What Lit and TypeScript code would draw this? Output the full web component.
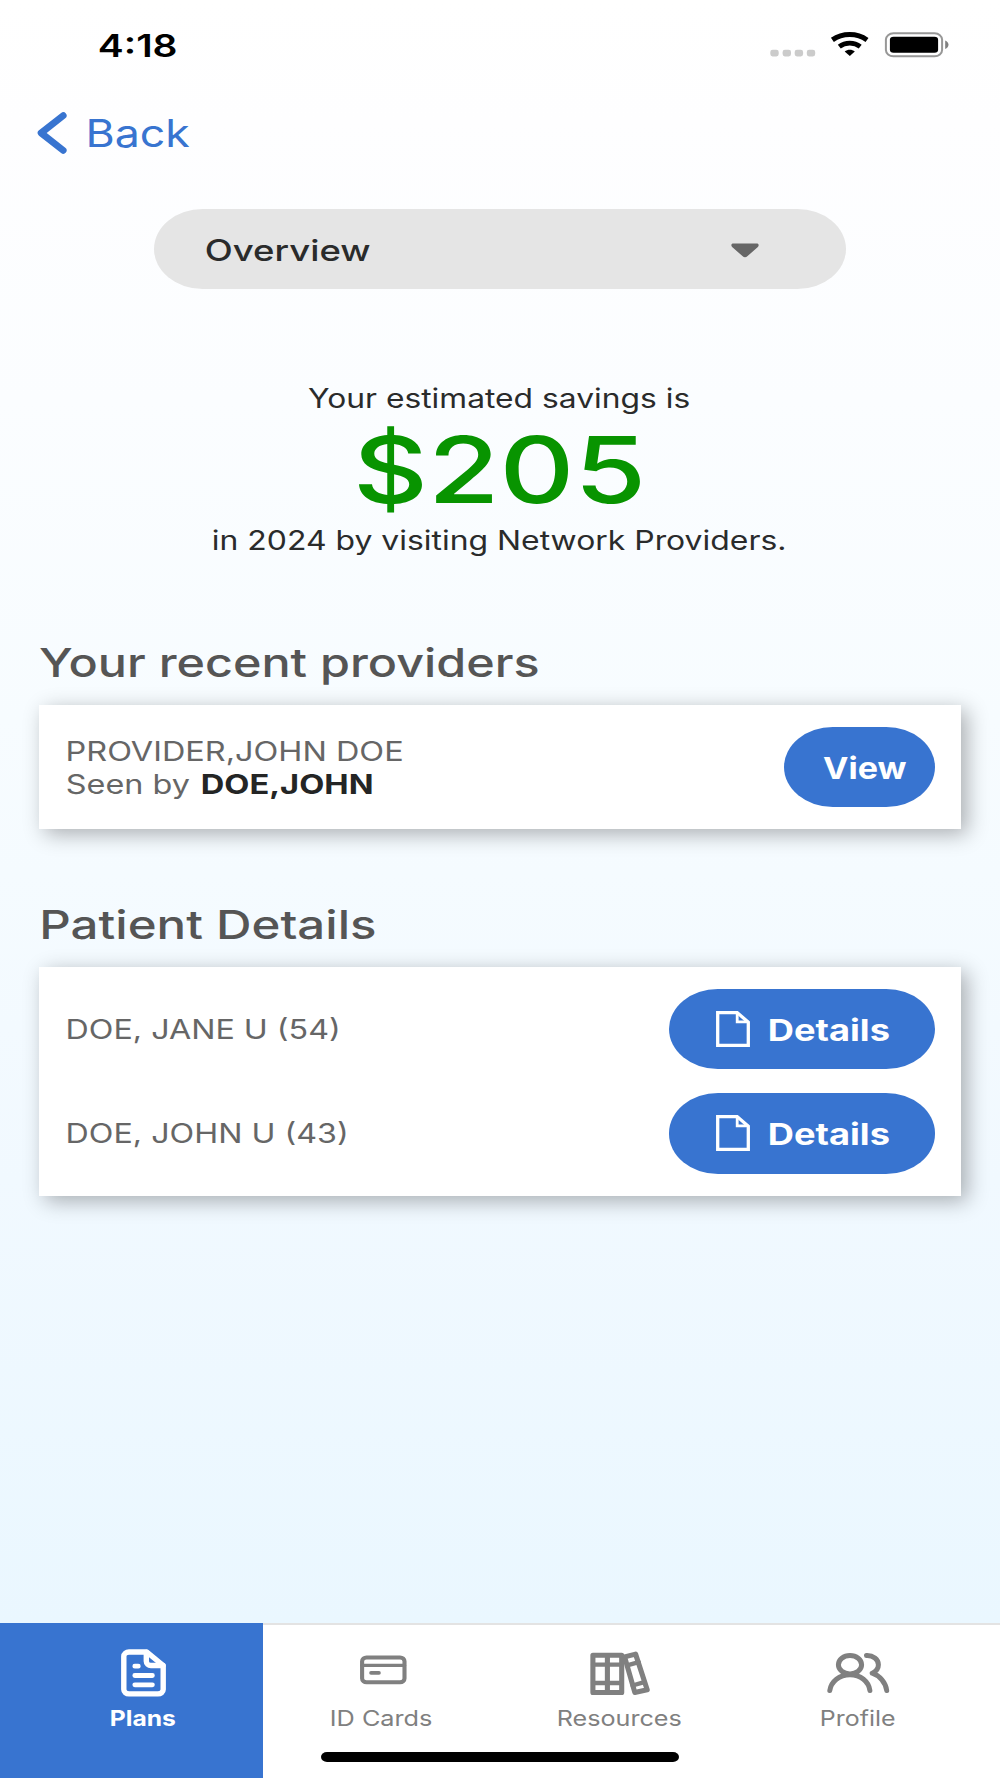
import { LitElement, html, css, svg } from "lit";
import { customElement, property, state } from "lit/decorators.js";
import { styleMap } from "lit/directives/style-map.js";

/** A single line of wide-set text, stretched so its ink spans exactly `span` pixels. */
@customElement("wide-text")
class WideText extends LitElement {
  @property({ type: Number }) span = 100;
  @property() text = "";
  @state() private matrix = "none";

  static styles = css`
    :host { display: block; flex: none; white-space: pre; }
    .line { display: block; }
    .ink { display: inline-block; transform-origin: 0 50%; white-space: pre; }
  `;

  firstUpdated() {
    const cs = getComputedStyle(this);
    const ctx = document.createElement("canvas").getContext("2d")!;
    ctx.font = `${cs.fontWeight} ${cs.fontSize} ${cs.fontFamily}`;
    const m = ctx.measureText(this.text);
    const left = -m.actualBoundingBoxLeft;
    const ink = m.actualBoundingBoxRight - left;
    const k = this.span / ink;
    this.matrix = `translateX(${(-left * k).toFixed(2)}px) scaleX(${k.toFixed(4)})`;
  }

  render() {
    return html`<span class="line" style=${styleMap({ width: `${this.span}px` })}
      ><span class="ink" style=${styleMap({ transform: this.matrix })}>${this.text}</span></span>`;
  }
}

const pageIcon = html`<svg class="page" width="34" height="36" viewBox="0 0 34 36" fill="none" stroke="#fff" stroke-width="3.3">
  <path d="M1.7 1.6H21.2L32.3 11.2V34.4H1.7Z" /><path d="M21.2 1.6V10.8H32.3" stroke-width="2.8" />
</svg>`;

const plansIcon = svg`<g stroke-width="5.4">
  <path d="M146.8 1651.5H129a5.2 4.4 0 0 0-5.2 4.4V1689a5.2 4.4 0 0 0 5.2 4.4H158a5.2 4.4 0 0 0 5.2-4.4V1665Z" />
  <path d="M146.3 1652V1660.8a4.6 4.2 0 0 0 4.6 4.2H163" />
  <path d="M134.8 1665.7H138.3M134.8 1675H152.4M134.8 1684.3H152.4" stroke-width="4.8" /></g>`;

const cardsIcon = svg`<rect x="361.1" y="1657" width="42.4" height="24.8" rx="4.4" ry="3.8" stroke-width="4.1" />
  <path d="M361 1664.8H403.5" stroke-width="3.2" /><path d="M370 1672.4H378" stroke-width="3.6" />`;

const resourcesIcon = svg`<g stroke-width="5.1">
  <path d="M591.9 1654.7H620.7V1692H591.9ZM606.4 1654.7V1692" />
  <path d="M592 1664.2H620.7M592 1682.5H620.7" stroke-width="4.3" />
  <path d="M623.6 1656.4L634.6 1653.6L646.2 1689.3L633.8 1691.9Z" />
  <path d="M627 1664.6L637.8 1661.6M631.5 1685L643.2 1681.6" stroke-width="4.3" /></g>`;

const profileIcon = svg`<g stroke-width="5">
  <ellipse cx="849" cy="1664.3" rx="11.6" ry="9.2" />
  <path d="M828.8 1690C830 1681 838.5 1674.2 849 1674.2S867.8 1681 868.9 1690" />
  <path d="M865.5 1655.1C872 1654.8 877.4 1659 877.4 1664.3C877.4 1668 875.2 1671 871.2 1672.7C878.5 1675 884.6 1682 885.7 1690" /></g>`;

const tabs = [
  { label: "Plans", span: 65, origin: 108, icon: plansIcon, active: true },
  { label: "ID Cards", span: 101, origin: 346, icon: cardsIcon, active: false },
  { label: "Resources", span: 123.5, origin: 584, icon: resourcesIcon, active: false },
  { label: "Profile", span: 74, origin: 822, icon: profileIcon, active: false },
];

const patients = [
  { name: "DOE, JANE U (54)", span: 269.5 },
  { name: "DOE, JOHN U (43)", span: 277.5 },
];

@customElement("app-root")
class AppRoot extends LitElement {
  static styles = css`
    :host {
      display: flex; flex-direction: column; box-sizing: border-box;
      width: 1000px; height: 1778px; overflow: hidden; position: relative;
      font-family: Inter, "Liberation Sans", sans-serif; color: #2a2b2b;
      background: linear-gradient(#fff 0, #fefeff 120px, #fbfdff 400px, #f7fcff 720px, #f1f9ff 1180px, #eaf7ff 1623px);
    }
    svg { display: block; flex: none; overflow: visible; }
    .status { display: flex; align-items: center; height: 90px; padding: 0 52px 0 99px; }
    .time { font-size: 31px; line-height: 90px; padding-top: 1px; font-weight: 600; color: #000; margin-right: auto; }
    .back { display: flex; align-items: center; height: 86px; padding-left: 37px; gap: 22px; color: #3874d0; }
    .back wide-text { font-size: 38px; line-height: 86px; }
    .select {
      display: flex; align-items: center; align-self: center; box-sizing: border-box;
      width: 692px; height: 80.5px; margin-top: 32.5px; padding: 2px 87px 0 52px;
      background: #e5e5e5; border-radius: 49px / 40.25px;
    }
    .select wide-text { font-size: 29.5px; font-weight: 500; line-height: 80px; margin-right: auto; }
    .select svg { margin-top: 1px; }
    .savings { display: flex; flex-direction: column; align-items: center; margin-top: 91px; }
    .note { font-size: 26.5px; line-height: 36px; margin-right: 4px; }
    .amount { font-size: 92px; line-height: 108px; font-weight: 500; color: #089400; margin-right: 3px; }
    .note.last { line-height: 33px; margin-right: 2px; }
    .heading { margin: 81px 0 17px 38.5px; font-size: 39.5px; line-height: 50px; font-weight: 500; color: #555; }
    .heading.second { margin: 70.5px 0 17px 43px; }
    .card {
      display: flex; flex-direction: column; gap: 24px; box-sizing: border-box; margin: 0 39px;
      padding: 22px 26px 22px 29px; background: #fff;
      box-shadow: 6px 5px 20px rgba(0, 0, 0, 0.31);
    }
    .row { display: flex; align-items: center; justify-content: space-between; height: 80.4px;
      font-size: 26.5px; color: #666; line-height: 32.6px; }
    .lines { padding-top: 1px; }
    .seen { display: flex; gap: 12px; margin-left: -1px; }
    .strong { font-weight: 700; color: #242525; }
    .button {
      display: flex; align-items: center; box-sizing: border-box; width: 266px; height: 80.4px; gap: 18.5px;
      margin: 0; padding: 0 0 0 47px; border: 0; border-radius: 49px / 40.2px; background: #3874d0;
      color: #fff; font: 700 30px / 80px Inter, "Liberation Sans", sans-serif; text-align: left;
    }
    .button wide-text { padding-top: 2px; }
    .button.view { width: 151px; padding-left: 38.5px; }
    .nav { display: flex; box-sizing: border-box; height: 155px; margin-top: auto; background: #fff; }
    .tab {
      display: flex; flex: none; flex-direction: column; align-items: center; box-sizing: border-box; width: 238px;
      padding-top: 22.5px; border-top: 2px solid #e3e3e3; font-size: 21.3px; line-height: 30px; color: #808080;
    }
    .tab wide-text { margin-top: 5.8px; }
    .tab.active {
      width: 262.5px; padding: 24.5px 0 0 24px; background: #3874d0; border: 0; color: #fff; font-weight: 700;
    }
    .nav::after { content: ""; flex: 1; border-top: 2px solid #e3e3e3; }
    .home { position: absolute; left: 321px; bottom: 16px; width: 358px; height: 10px; border-radius: 6px / 5px; background: #000; }
  `;

  render() {
    return html`
      <div class="status">
        <wide-text class="time" text="4:18" span="77.5"></wide-text>
        <svg width="178" height="26" viewBox="770 32 178 26">
          <g fill="#cbcbcb">
            ${[770.3, 782.6, 794.7, 806.8].map((x) => svg`<rect x=${x} y="49.8" width="8.4" height="6.6" rx="2.3" />`)}
          </g>
          <g fill="none" stroke="#000">
            <path d="M832.4 39.9C842.5 32.6 857 32.6 867 39.9" stroke-width="5" />
            <path d="M839.3 46.6C845.3 42 854.2 42 860.2 46.6" stroke-width="4.8" />
          </g>
          <path d="M844.7 51.6C847.6 49.2 852 49.2 854.8 51.6L849.8 56Z" fill="#000" />
          <rect x="885.9" y="33.3" width="56.2" height="23" rx="7.5" ry="6.3" fill="none" stroke="#979797" stroke-width="2" />
          <rect x="889.9" y="36.8" width="48.2" height="15.9" rx="3.6" ry="3" fill="#000" />
          <path d="M945.2 40.6C947.2 41.4 948.5 43 948.5 44.8S947.2 48.2 945.2 49Z" fill="#808080" />
        </svg>
      </div>
      <div class="back">
        <svg width="30" height="42" viewBox="0 0 30 42" fill="none" stroke="#3874d0" stroke-width="6.8" stroke-linecap="round" stroke-linejoin="round">
          <path d="M26.2 3.6L4.1 21L26.2 38.4" />
        </svg>
        <wide-text text="Back" span="101"></wide-text>
      </div>
      <div class="select">
        <wide-text text="Overview" span="164"></wide-text>
        <svg width="28" height="15" viewBox="0 0 28 15">
          <path d="M2.5 0.6H25.5C28 0.6 28.3 2.6 26.6 4.2L16.6 13C14.8 14.8 13.2 14.8 11.4 13L1.4 4.2C-0.3 2.6 0 0.6 2.5 0.6Z" fill="#666" />
        </svg>
      </div>
      <div class="savings">
        <wide-text class="note" text="Your estimated savings is" span="381"></wide-text>
        <wide-text class="amount" text="$205" span="282"></wide-text>
        <wide-text class="note last" text="in 2024 by visiting Network Providers." span="571.5"></wide-text>
      </div>
      <wide-text class="heading" text="Your recent providers" span="499"></wide-text>
      <div class="card">
        <div class="row">
          <div class="lines">
            <wide-text text="PROVIDER,JOHN DOE" span="334.5"></wide-text>
            <div class="seen">
              <wide-text text="Seen by" span="123"></wide-text>
              <wide-text class="strong" text="DOE,JOHN" span="170"></wide-text>
            </div>
          </div>
          <button class="button view"><wide-text text="View" span="84"></wide-text></button>
        </div>
      </div>
      <wide-text class="heading second" text="Patient Details" span="332"></wide-text>
      <div class="card">
        ${patients.map(
          (p) => html`<div class="row">
            <wide-text text=${p.name} span=${p.span}></wide-text>
            <button class="button">${pageIcon}<wide-text text="Details" span="120"></wide-text></button>
          </div>`
        )}
      </div>
      <div class="nav">
        ${tabs.map(
          (t) => html`<div class="tab ${t.active ? "active" : ""}">
            <svg width="70" height="50" viewBox="${t.origin} 1647.5 70 50" fill="none" stroke="currentColor" stroke-linecap="round" stroke-linejoin="round">${t.icon}</svg>
            <wide-text text=${t.label} span=${t.span}></wide-text>
          </div>`
        )}
      </div>
      <div class="home"></div>
    `;
  }
}
